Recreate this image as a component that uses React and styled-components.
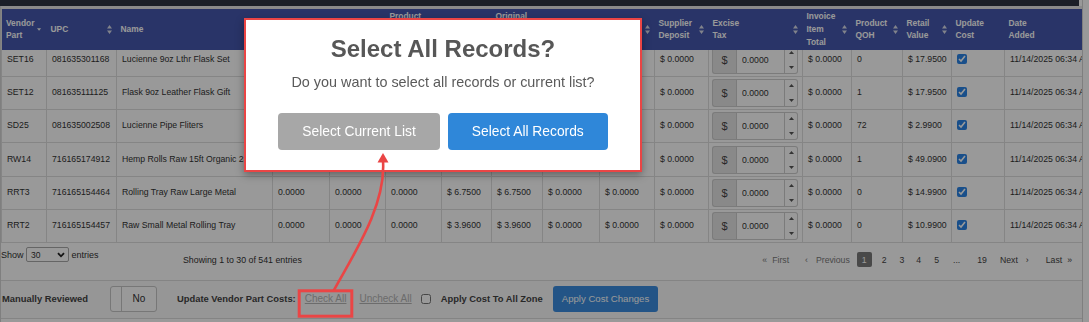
import React, { useLayoutEffect, useRef } from "react";
import styled, { createGlobalStyle, css } from "styled-components";

const GlobalStyle = createGlobalStyle`
  * { box-sizing: border-box; }
  html, body { margin: 0; padding: 0; background: #fff; }
  body {
    font-family: "Liberation Sans", Arial, sans-serif;
    color: #333;
    overflow: hidden;
  }
`;

const columns = [
  { key: "part", label: ["Vendor", "Part"], width: 45, sort: "desc" },
  { key: "upc", label: ["UPC"], width: 70, sort: "both" },
  { key: "name", label: ["Name"], width: 156, sort: "both" },
  { key: "invQty", label: ["Invoice", "Qty"], width: 57, sort: "both" },
  { key: "recQty", label: ["Received", "Qty"], width: 56, sort: "both" },
  { key: "caseQty", label: ["Product", "Case", "Qty"], width: 56, sort: "both" },
  { key: "unitCost", label: ["Unit", "Cost"], width: 50, sort: "both" },
  { key: "origCost", label: ["Original", "Unit", "Cost"], width: 51, sort: "both" },
  { key: "discount", label: ["Discount"], width: 57, sort: "both" },
  { key: "freight", label: ["Freight"], width: 55, sort: "both" },
  { key: "deposit", label: ["Supplier", "Deposit"], width: 54, sort: "both" },
  { key: "tax", label: ["Excise", "Tax"], width: 94, sort: "both", type: "tax" },
  { key: "total", label: ["Invoice", "Item", "Total"], width: 49, sort: "both" },
  { key: "qoh", label: ["Product", "QOH"], width: 51, sort: "both" },
  { key: "retail", label: ["Retail", "Value"], width: 49, sort: "both" },
  { key: "update", label: ["Update", "Cost"], width: 53, type: "check" },
  { key: "added", label: ["Date", "Added"], width: 110 },
];

const base = {
  invQty: "0.0000",
  recQty: "0.0000",
  caseQty: "0.0000",
  discount: "$ 0.0000",
  freight: "$ 0.0000",
  deposit: "$ 0.0000",
  total: "$ 0.0000",
  added: "11/14/2025 06:34 AM",
};

const rows = [
  { ...base, part: "SET16", upc: "081635301168", name: "Lucienne 9oz Lthr Flask Set", unitCost: "$ 7.1600", origCost: "$ 7.1600", qoh: "0", retail: "$ 17.9500" },
  { ...base, part: "SET12", upc: "081635111125", name: "Flask 9oz Leather Flask Gift", unitCost: "$ 7.1600", origCost: "$ 7.1600", qoh: "1", retail: "$ 17.9500" },
  { ...base, part: "SD25", upc: "081635002508", name: "Lucienne Pipe Fliters", unitCost: "$ 1.1900", origCost: "$ 1.1900", qoh: "72", retail: "$ 2.9900" },
  { ...base, part: "RW14", upc: "716165174912", name: "Hemp Rolls Raw 15ft Organic 24ct", unitCost: "$ 19.6000", origCost: "$ 19.6000", qoh: "1", retail: "$ 49.0900" },
  { ...base, part: "RRT3", upc: "716165154464", name: "Rolling Tray Raw Large Metal", unitCost: "$ 6.7500", origCost: "$ 6.7500", qoh: "0", retail: "$ 14.9900" },
  { ...base, part: "RRT2", upc: "716165154457", name: "Raw Small Metal Rolling Tray", unitCost: "$ 3.9600", origCost: "$ 3.9600", qoh: "0", retail: "$ 10.9900" },
];

const pages = [
  { label: "First", before: "«", disabled: true, ml: 0 },
  { label: "Previous", before: "‹", disabled: true, ml: 16, inner: 8 },
  { label: "1", active: true, ml: 7 },
  { label: "2", ml: 10 },
  { label: "3", ml: 13 },
  { label: "4", ml: 12 },
  { label: "5", ml: 13 },
  { label: "...", ml: 14 },
  { label: "19", ml: 17 },
  { label: "Next", after: "›", ml: 13, inner: 8 },
  { label: "Last", after: "»", ml: 17 },
];

const Page = styled.div`
  position: relative;
  width: 1083px;
  height: 322px;
  border-left: 1px solid #d4d4d4;
  border-right: 1px solid #d4d4d4;
`;

const TopBar = styled.div`
  height: 6px;
  margin: 0 3px 0 -1px;
  background: #2e3443;
`;

const TopGap = styled.div`
  height: 3px;
  background: #e6e6e6;
`;

const Scroller = styled.div`
  height: 234px;
  overflow: hidden;
  border-bottom: 1px solid #dedede;
`;

const Table = styled.table`
  border-collapse: collapse;
  table-layout: fixed;
  width: ${(p) => p.$width}px;
`;

const Th = styled.th`
  position: sticky;
  top: 0;
  z-index: 1;
  height: 41px;
  padding: 0 5px 0 4px;
  background: #4557ae;
  color: #fff;
  font-size: 8.4px;
  font-weight: 700;
  line-height: 12.7px;
  text-align: left;
  vertical-align: middle;

  &:first-child {
    border-left: 1px solid #dedede;
  }
`;

const HeadInner = styled.div`
  display: flex;
  align-items: center;
  justify-content: space-between;
  gap: 3px;
`;

const Tr = styled.tr`
  height: 33.33px;
`;

const Td = styled.td`
  padding: ${(p) => (p.$tight ? "0 4px 0 3px" : "0 5px 2px")};
  border: 1px solid #dedede;
  font-size: 8.7px;
  color: #333;
  white-space: nowrap;
  overflow: hidden;
  vertical-align: middle;
`;

const TaxGroup = styled.div`
  display: flex;
  width: 86px;
  height: 28px;
`;

const Addon = styled.span`
  width: 24px;
  display: flex;
  align-items: center;
  justify-content: center;
  background: #e4e4e4;
  border: 1px solid #cdcdcd;
  border-right: none;
  border-radius: 3px 0 0 3px;
  font-size: 11px;
  color: #444;
`;

const TaxInput = styled.input`
  width: 49px;
  min-width: 0;
  margin: 0;
  padding: 0 5px;
  border: 1px solid #cdcdcd;
  background: #fff;
  font: 8.7px "Liberation Sans", Arial, sans-serif;
  color: #333;
  outline: none;
`;

const Spinner = styled.div`
  width: 13px;
  display: flex;
  flex-direction: column;
  justify-content: space-between;
  align-items: center;
  padding: 4px 0;
  border: 1px solid #cdcdcd;
  border-left: none;
  border-radius: 0 3px 3px 0;
  background: #fff;
`;

const Check = styled.input`
  width: 10px;
  height: 10px;
  margin: 0;
  display: block;
  accent-color: #2b84e6;
`;

const DataFooter = styled.div`
  display: flex;
  align-items: flex-start;
  height: 37px;
  padding-top: 4px;
`;

const LengthControl = styled.div`
  display: flex;
  align-items: center;
  gap: 2.5px;
  width: 182px;
  height: 15px;
  font-size: 9px;
  color: #333;
`;

const FakeSelect = styled.div`
  width: 43px;
  height: 15px;
  display: flex;
  align-items: center;
  justify-content: space-between;
  padding: 0 3px 0 4px;
  border: 1px solid #a9a9a9;
  border-radius: 2px;
  background: #fff;
  font-size: 8.5px;
`;

const Info = styled.div`
  margin-top: 7px;
  font-size: 8.8px;
  line-height: 12px;
  color: #333;
`;

const Pager = styled.div`
  display: flex;
  align-items: center;
  margin: 5px 10px 0 auto;
  font-size: 8.7px;
`;

const PageLink = styled.span`
  display: flex;
  align-items: center;
  height: 15px;
  margin-left: ${(p) => p.$ml}px;
  color: ${(p) => (p.$disabled ? "#7a7a7a" : "#444")};

  ${(p) =>
    p.$active &&
    css`
      padding: 0 5px;
      border-radius: 2px;
      background: #7a7a7a;
      color: #fff;
    `}
`;

const Arrow = styled.span`
  margin-${(p) => (p.$after ? "left" : "right")}: ${(p) => p.$gap}px;
`;

const Toolbar = styled.div`
  display: flex;
  align-items: center;
  gap: 9px;
  height: 39px;
  padding-bottom: 2px;
  border-top: 1px solid #dcdcdc;
  border-bottom: 1px solid #dcdcdc;
  background: #fafafa;
`;

const BoldLabel = styled.span`
  margin-left: ${(p) => p.$ml || 0}px;
  font-size: 9.4px;
  font-weight: 700;
  color: #444;
  white-space: nowrap;
`;

const Toggle = styled.div`
  display: flex;
  width: 47px;
  height: 26px;
  margin-left: 13px;
  border: 1px solid #c6c6c6;
  border-radius: 3px;
  background: #fff;
  overflow: hidden;
`;

const ToggleHandle = styled.span`
  width: 11px;
  border-right: 1px solid #c6c6c6;
`;

const ToggleLabel = styled.span`
  flex: 1;
  display: flex;
  align-items: center;
  justify-content: center;
  font-size: 10px;
  color: #333;
`;

const TextLink = styled.a`
  margin-left: ${(p) => p.$ml || 0}px;
  font-size: 10px;
  color: #b4b4b4;
  text-decoration: underline;
  white-space: nowrap;
`;

const ApplyButton = styled.button`
  height: 26px;
  margin-left: 1px;
  padding: 0 9px;
  border: none;
  border-radius: 3px;
  background: #3b8de0;
  color: #fff;
  font: 9.6px "Liberation Sans", Arial, sans-serif;
`;

const Overlay = styled.div`
  position: fixed;
  inset: 0;
  z-index: 10;
  background: rgba(0, 0, 0, 0.4);
`;

const Modal = styled.div`
  position: absolute;
  left: 243px;
  top: 18px;
  z-index: 20;
  width: 398px;
  height: 154px;
  display: flex;
  flex-direction: column;
  align-items: center;
  padding-top: 15px;
  background: #fff;
  border: 2.5px solid #ea4545;
  box-shadow: 0 3px 8px rgba(0, 0, 0, 0.35);
`;

const ModalTitle = styled.h2`
  margin: 0;
  font-size: 24px;
  line-height: 28px;
  font-weight: 700;
  color: #575757;
`;

const ModalText = styled.p`
  margin: 9.7px 0 0;
  font-size: 14.4px;
  line-height: 18px;
  color: #5a5a5a;
`;

const ModalActions = styled.div`
  display: flex;
  gap: 8px;
  margin-top: 22.8px;
`;

const ModalButton = styled.button`
  height: 37px;
  padding: 0 24px;
  border: none;
  border-radius: 4px;
  background: ${(p) => (p.$primary ? "#2f87d9" : "#a7a7a7")};
  color: #fff;
  font: 13.8px "Liberation Sans", Arial, sans-serif;
`;

const Annotations = styled.svg`
  position: absolute;
  left: -1px;
  top: 0;
  z-index: 30;
  pointer-events: none;
`;

const SortIcon = ({ dir }) =>
  dir === "desc" ? (
    <svg width="7" height="5" viewBox="0 0 7 5">
      <path d="M0 0.5H7L3.5 4.5Z" fill="#f2f2f2" />
    </svg>
  ) : (
    <svg width="5" height="9" viewBox="0 0 5 9" style={{ flexShrink: 0 }}>
      <path d="M2.5 0L5 3.5H0Z M2.5 9L5 5.5H0Z" fill="#d8dbe8" />
    </svg>
  );

const SpinArrow = ({ up }) => (
  <svg width="5" height="3" viewBox="0 0 5 3">
    <path d={up ? "M2.5 0L5 3H0Z" : "M0 0H5L2.5 3Z"} fill="#555" />
  </svg>
);

const Chevron = () => (
  <svg width="8" height="6" viewBox="0 0 8 6">
    <path d="M1 1.2L4 4.3L7 1.2" fill="none" stroke="#222" strokeWidth="1.8" />
  </svg>
);

const renderCell = (col, row) => {
  if (col.type === "tax") {
    return (
      <Td key={col.key} $tight>
        <TaxGroup>
          <Addon>$</Addon>
          <TaxInput value="0.0000" readOnly />
          <Spinner>
            <SpinArrow up />
            <SpinArrow />
          </Spinner>
        </TaxGroup>
      </Td>
    );
  }
  if (col.type === "check") {
    return (
      <Td key={col.key}>
        <Check type="checkbox" checked readOnly />
      </Td>
    );
  }
  return <Td key={col.key}>{row[col.key]}</Td>;
};

const App = () => {
  const scrollRef = useRef(null);
  const tableWidth = columns.reduce((sum, c) => sum + c.width, 0);

  useLayoutEffect(() => {
    if (scrollRef.current) scrollRef.current.scrollTop = 7;
  }, []);

  return (
    <Page>
      <GlobalStyle />
      <TopBar />
      <TopGap />
      <Scroller ref={scrollRef}>
        <Table $width={tableWidth}>
          <colgroup>
            {columns.map((c) => (
              <col key={c.key} style={{ width: c.width }} />
            ))}
          </colgroup>
          <thead>
            <tr>
              {columns.map((c) => (
                <Th key={c.key}>
                  <HeadInner>
                    <span>
                      {c.label.map((line, i) => (
                        <React.Fragment key={line}>
                          {i > 0 && <br />}
                          {line}
                        </React.Fragment>
                      ))}
                    </span>
                    {c.sort && <SortIcon dir={c.sort} />}
                  </HeadInner>
                </Th>
              ))}
            </tr>
          </thead>
          <tbody>
            {rows.map((row) => (
              <Tr key={row.part}>{columns.map((c) => renderCell(c, row))}</Tr>
            ))}
          </tbody>
        </Table>
      </Scroller>

      <DataFooter>
        <LengthControl>
          <span>Show</span>
          <FakeSelect>
            <span>30</span>
            <Chevron />
          </FakeSelect>
          <span>entries</span>
        </LengthControl>
        <Info>Showing 1 to 30 of 541 entries</Info>
        <Pager>
          {pages.map((p) => (
            <PageLink key={p.label} $ml={p.ml} $active={p.active} $disabled={p.disabled}>
              {p.before && <Arrow $gap={p.inner || 5}>{p.before}</Arrow>}
              {p.label}
              {p.after && (
                <Arrow $after $gap={p.inner || 5}>
                  {p.after}
                </Arrow>
              )}
            </PageLink>
          ))}
        </Pager>
      </DataFooter>

      <Toolbar>
        <BoldLabel $ml={1}>Manually Reviewed</BoldLabel>
        <Toggle>
          <ToggleHandle />
          <ToggleLabel>No</ToggleLabel>
        </Toggle>
        <BoldLabel $ml={11}>Update Vendor Part Costs:</BoldLabel>
        <TextLink>Check All</TextLink>
        <TextLink $ml={4}>Uncheck All</TextLink>
        <Check type="checkbox" readOnly />
        <BoldLabel $ml={1}>Apply Cost To All Zone</BoldLabel>
        <ApplyButton>Apply Cost Changes</ApplyButton>
      </Toolbar>

      <Overlay />

      <Modal>
        <ModalTitle>Select All Records?</ModalTitle>
        <ModalText>Do you want to select all records or current list?</ModalText>
        <ModalActions>
          <ModalButton>Select Current List</ModalButton>
          <ModalButton $primary>Select All Records</ModalButton>
        </ModalActions>
      </Modal>

      <Annotations width="1089" height="322" viewBox="0 0 1089 322">
        <path
          d="M334 290 C355 252, 386 205, 383 161"
          fill="none"
          stroke="#ea4545"
          strokeWidth="2.6"
          strokeLinecap="round"
        />
        <path d="M383 153L388.5 162.5H377.5Z" fill="#ea4545" />
        <rect x="299.2" y="290.8" width="52.6" height="25.4" fill="none" stroke="#ea4545" strokeWidth="3" />
      </Annotations>
    </Page>
  );
};

export default App;
